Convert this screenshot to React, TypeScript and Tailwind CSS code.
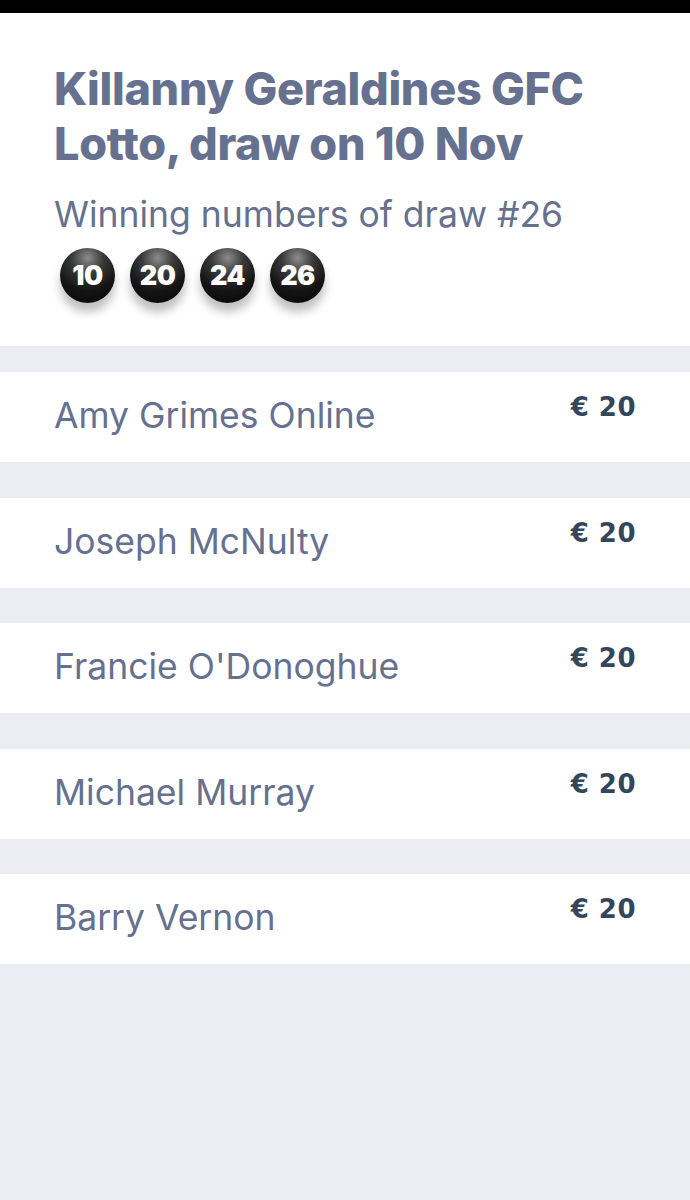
const winners = [
  "Amy Grimes Online",
  "Joseph McNulty",
  "Francie O'Donoghue",
  "Michael Murray",
  "Barry Vernon",
];

const numbers = [10, 20, 24, 26];

function Ball({ n }: { n: number }) {
  return (
    <div className="flex h-[55px] w-[55px] items-center justify-center rounded-full bg-[radial-gradient(circle_at_50%_18%,#8c8c8c_0%,#3a3a3a_30%,#151515_62%,#050505_100%)] shadow-[0_9px_10px_rgba(0,0,0,0.25)]">
      <span className="font-['Inter',sans-serif] text-[27px] font-black leading-none tracking-[-0.5px] text-white">
        {n}
      </span>
    </div>
  );
}

export default function App() {
  return (
    <div className="min-h-[1200px] bg-[#ebedf2] font-['Inter',sans-serif]">
      <div className="h-[13px] bg-black" />
      <div className="bg-white px-[54px] pb-[43px] pt-[48px]">
        <h1 className="text-[45px] font-extrabold leading-[55px] tracking-[-0.3px] text-[#66708f]">
          Killanny Geraldines GFC
          <br />
          Lotto, draw on 10 Nov
        </h1>
        <p className="mt-[24px] text-[35.5px] leading-[40px] text-[#66708f]">
          Winning numbers of draw #26
        </p>
        <div className="mt-[13px] flex gap-[15px] pl-[6px]">
          {numbers.map((n) => (
            <Ball key={n} n={n} />
          ))}
        </div>
      </div>
      <div className="flex flex-col gap-[35.5px] pt-[26px]">
        {winners.map((name) => (
          <div
            key={name}
            className="flex h-[90px] items-start justify-between bg-white pl-[54px] pr-[54px]"
          >
            <span className="mt-[24px] text-[35.5px] leading-[40px] text-[#66708f]">
              {name}
            </span>
            <span className="mt-[20px] font-['DejaVu_Sans',sans-serif] text-[26px] font-bold leading-[30px] tracking-[0.5px] text-[#34465c]">
              € 20
            </span>
          </div>
        ))}
      </div>
    </div>
  );
}
